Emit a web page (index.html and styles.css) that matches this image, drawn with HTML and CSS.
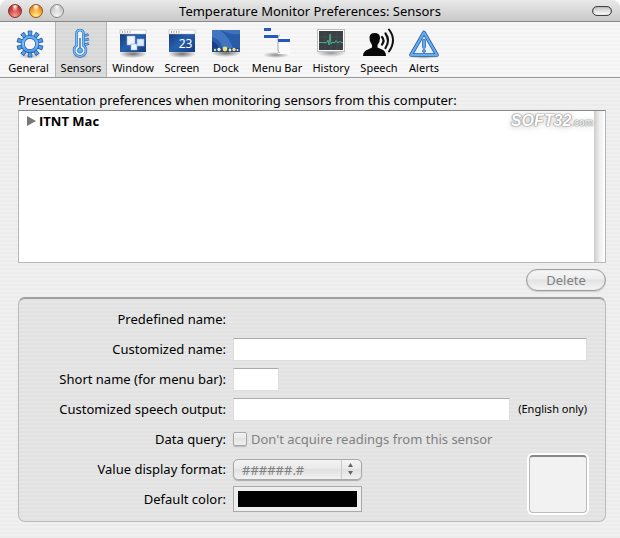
FILE: index.html
```html
<!DOCTYPE html>
<html lang="en">

<head>
    <meta charset="UTF-8">
    <meta name="viewport" content="width=device-width, initial-scale=1.0">
    <title>Temperature Monitor Preferences: Sensors</title>
    <link rel="stylesheet" href="styles.css">
</head>

<body>

    <!-- shared gradients -->
    <svg class="defs" width="0" height="0" aria-hidden="true">
        <defs>
            <linearGradient id="aqua" x1="0" y1="0" x2="0" y2="1">
                <stop offset="0" stop-color="#5aa9f2"/>
                <stop offset="0.5" stop-color="#7dc0fb"/>
                <stop offset="1" stop-color="#4a98ea"/>
            </linearGradient>
            <linearGradient id="desktop" x1="0" y1="0" x2="1" y2="1">
                <stop offset="0" stop-color="#12356f"/>
                <stop offset="0.5" stop-color="#2660ad"/>
                <stop offset="1" stop-color="#123c80"/>
            </linearGradient>
            <radialGradient id="shade">
                <stop offset="0" stop-color="#000" stop-opacity="0.55"/>
                <stop offset="1" stop-color="#000" stop-opacity="0"/>
            </radialGradient>
        </defs>
    </svg>

    <header class="titlebar">
        <div class="lights">
            <button class="light close" aria-label="Close"></button>
            <button class="light minimize" aria-label="Minimize"></button>
            <button class="light zoom" aria-label="Zoom"></button>
        </div>
        <h1>Temperature Monitor Preferences: Sensors</h1>
        <button class="pill" aria-label="Toggle toolbar"></button>
    </header>

    <nav class="toolbar">
        <button class="tool">
            <svg viewBox="0 0 32 32">
                <ellipse cx="17" cy="29" rx="12" ry="3" fill="url(#shade)" opacity="0.5"/>
                <g transform="translate(1 1)">
                    <g fill="#4f9fee" stroke="#2458a5" stroke-width="0.800">
                        <g id="teeth">
                            <path d="M14.500 8 L14 3 H18 L17.500 8 Z"/>
                            <path d="M14.500 8 L14 3 H18 L17.500 8 Z" transform="rotate(36 16 16)"/>
                            <path d="M14.500 8 L14 3 H18 L17.500 8 Z" transform="rotate(72 16 16)"/>
                            <path d="M14.500 8 L14 3 H18 L17.500 8 Z" transform="rotate(108 16 16)"/>
                            <path d="M14.500 8 L14 3 H18 L17.500 8 Z" transform="rotate(144 16 16)"/>
                        </g>
                        <use href="#teeth" transform="rotate(180 16 16)"/>
                    </g>
                    <circle cx="16" cy="16" r="7.200" fill="none" stroke="#2458a5" stroke-width="4"/>
                    <circle cx="16" cy="16" r="7.200" fill="none" stroke="url(#aqua)" stroke-width="2.600"/>
                </g>
            </svg>
            <span>General</span>
        </button>
        <button class="tool selected">
            <svg viewBox="0 0 32 32">
                <ellipse cx="15" cy="29" rx="8" ry="3" fill="url(#shade)" opacity="0.5"/>
                <g transform="translate(0 1)">
                    <path d="M17 6 Q18.500 8.500 23.500 6.500 M17 10.500 Q19 13 24 11 M17 15 Q19 17.500 24 15.500" fill="none" stroke="#2d6db9" stroke-width="2.600"/>
                    <path d="M17 6 Q18.500 8.500 23.500 6.500 M17 10.500 Q19 13 24 11 M17 15 Q19 17.500 24 15.500" fill="none" stroke="#74baf8" stroke-width="1.300"/>
                    <path d="M11.500 17.500 V5.500 A3.500 3.500 0 0 1 18.500 5.500 V17.500 A6 6 0 1 1 11.500 17.500 Z" fill="#eaf2fa" stroke="#2d6db9" stroke-width="2.600"/>
                    <path d="M11.500 17.500 V5.500 A3.500 3.500 0 0 1 18.500 5.500 V17.500 A6 6 0 1 1 11.500 17.500 Z" fill="none" stroke="#7bbdf7" stroke-width="1.400"/>
                    <path d="M15 10 V20" stroke="#3c83d0" stroke-width="1.600"/>
                    <circle cx="15" cy="22.500" r="2.600" fill="#67b1f6" stroke="#2d6db9" stroke-width="0.800"/>
                </g>
            </svg>
            <span>Sensors</span>
        </button>
        <button class="tool">
            <svg viewBox="0 0 32 32">
                <ellipse cx="16" cy="27" rx="14" ry="4" fill="url(#shade)"/>
                <rect x="3" y="3" width="26" height="22" fill="url(#desktop)"/>
                <rect x="3" y="3" width="26" height="4" fill="#fff" stroke="#aaa" stroke-width="0.500"/>
                <path d="M5 5 H15" stroke="#555" stroke-dasharray="1 1.500"/>
                <g stroke="#8fb1dc" stroke-width="0.600">
                    <rect x="10" y="9" width="8" height="9" fill="#f0f3f7"/>
                    <rect x="20" y="12" width="7" height="7" fill="#dfe8f4"/>
                    <rect x="14" y="17" width="6" height="6" fill="#f0f3f7"/>
                </g>
            </svg>
            <span>Window</span>
        </button>
        <button class="tool">
            <svg viewBox="0 0 32 32">
                <ellipse cx="16" cy="27" rx="14" ry="4" fill="url(#shade)"/>
                <rect x="3" y="3" width="26" height="22" fill="url(#desktop)"/>
                <rect x="3" y="3" width="26" height="4" fill="#fff" stroke="#aaa" stroke-width="0.500"/>
                <path d="M5 5 H15" stroke="#555" stroke-dasharray="1 1.500"/>
                <text x="19.500" y="20.500" text-anchor="middle" class="digits">23</text>
            </svg>
            <span>Screen</span>
        </button>
        <button class="tool">
            <svg viewBox="0 0 32 32">
                <ellipse cx="16" cy="26" rx="15" ry="4" fill="url(#shade)"/>
                <rect x="2" y="3" width="28" height="22" fill="#285ca9"/>
                <path d="M2 3 H10 Q20 10 24 25 H13 Q12 12 2 10 Z" fill="#3f76bf"/>
                <path d="M10 3 Q20 8 30 7 V3 Z" fill="#3e73bb"/>
                <path d="M2 14 Q8 16 10 25 H2 Z" fill="#173f82"/>
                <rect x="3" y="21" width="26" height="4" fill="#274571"/>
                <circle cx="5" cy="23" r="1.200" fill="#aee4b0"/>
                <circle cx="9" cy="22.500" r="1.700" fill="#e4e7ea"/>
                <circle cx="15" cy="22" r="2.400" fill="#f4e36a"/>
                <circle cx="20" cy="23" r="1.400" fill="#e8e8e8"/>
                <circle cx="24" cy="22.500" r="1.700" fill="#f3d98a"/>
                <circle cx="27.500" cy="23" r="1.100" fill="#d4dff0"/>
            </svg>
            <span>Dock</span>
        </button>
        <button class="tool">
            <svg viewBox="0 0 32 32">
                <ellipse cx="15" cy="28" rx="13" ry="3" fill="url(#shade)" opacity="0.8"/>
                <rect x="17" y="10" width="12" height="17" fill="#fafafa"/>
                <path d="M19 8 Q17 8 17 11 V23 Q17 26 19 26" fill="none" stroke="#a5a5a5"/>
                <rect x="3" y="1" width="7" height="3" fill="#2558c4"/>
                <rect x="3" y="8" width="14" height="3" fill="#2558c4"/>
                <rect x="17" y="12" width="12" height="3" fill="#2558c4"/>
            </svg>
            <span>Menu Bar</span>
        </button>
        <button class="tool">
            <svg viewBox="0 0 32 32">
                <ellipse cx="16" cy="26" rx="15" ry="4" fill="url(#shade)" opacity="0.7"/>
                <rect x="2.500" y="2.500" width="27" height="22" fill="#fff" stroke="#bbb"/>
                <rect x="4" y="4" width="24" height="19" fill="#3a4044"/>
                <path d="M4 10 H28 M4 16 H28 M10 4 V23 M16 4 V23 M22 4 V23" stroke="#4e565a" stroke-width="0.600"/>
                <path d="M4 15.500 H12 L13 13 L14 18 L15 7 L16 17 L17 15.500 H20 L21 13.500 L23 16 L25 14 L26 15.500 H28" fill="none" stroke="#49b488" stroke-width="0.900"/>
            </svg>
            <span>History</span>
        </button>
        <button class="tool">
            <svg viewBox="0 0 32 32">
                <path d="M0 29 Q0 24 5 22.500 L9 20.500 V18 Q6 14 6.500 10 Q7 6 11.500 6 Q17 6 17 11 Q17 15 14.500 18 V20.500 L19 22.500 Q23 24 23 29 Z" fill="#080808"/>
                <g fill="none" stroke="#111" stroke-linecap="round">
                    <path d="M19 10 Q22 13.500 19 17.500" stroke-width="2.200"/>
                    <path d="M22.500 6.500 Q27.500 13.500 22.500 21" stroke-width="2.200"/>
                    <path d="M26 2.500 Q34 13 26 24.500" stroke-width="2"/>
                </g>
            </svg>
            <span>Speech</span>
        </button>
        <button class="tool">
            <svg viewBox="0 0 32 32">
                <ellipse cx="16" cy="29.500" rx="15" ry="2.500" fill="url(#shade)" opacity="0.7"/>
                <path d="M16 5.500 L29 28 H3 Z" fill="#e9f2fb" stroke="#2658a5" stroke-width="3.600" stroke-linejoin="round"/>
                <path d="M16 5.500 L29 28 H3 Z" fill="none" stroke="#63adf3" stroke-width="2.200" stroke-linejoin="round"/>
                <path d="M16 13.500 V20" stroke="#2658a5" stroke-width="3.600" stroke-linecap="round"/>
                <path d="M16 13.500 V20" stroke="#63adf3" stroke-width="2.200" stroke-linecap="round"/>
                <circle cx="16" cy="24" r="1.500" fill="#63adf3" stroke="#2658a5" stroke-width="0.700"/>
            </svg>
            <span>Alerts</span>
        </button>
    </nav>

    <main>
        <h2>Presentation preferences when monitoring sensors from this computer:</h2>

        <div class="sensors">
            <ul>
                <li>
                    <button class="disclosure" aria-expanded="false">
                        <svg viewBox="0 0 9 10"><path d="M0 0 L9 5 L0 10 Z" fill="#777"/></svg>
                        ITNT Mac
                    </button>
                </li>
            </ul>
            <div class="scroller"></div>
            <span class="watermark">SOFT32<small>.com</small></span>
        </div>

        <div class="actions">
            <button class="delete" disabled>Delete</button>
        </div>

        <form class="details">
            <span class="label">Predefined name:</span>
            <span></span>

            <label for="custom">Customized name:</label>
            <input class="text" type="text" id="custom">

            <label for="short">Short name (for menu bar):</label>
            <input class="text short" type="text" id="short">

            <label for="speech">Customized speech output:</label>
            <div class="line">
                <input class="text" type="text" id="speech">
                <small>(English only)</small>
            </div>

            <span class="label">Data query:</span>
            <div class="line check">
                <input type="checkbox" id="skip" disabled>
                <label for="skip">Don't acquire readings from this sensor</label>
            </div>

            <label for="format">Value display format:</label>
            <div class="popup">
                <select id="format" disabled>
                    <option>######.#</option>
                </select>
                <svg viewBox="0 0 5 12"><path d="M0 4 L2.500 0 L5 4 Z M0 8 L2.500 12 L5 8 Z" fill="#666"/></svg>
            </div>

            <label for="color">Default color:</label>
            <input class="color" type="color" id="color" value="#000000">

            <div class="well"></div>
        </form>
    </main>

</body>
</html>
```

FILE: styles.css
```css
* {
    margin: 0;
    padding: 0;
    box-sizing: border-box;
}

html {
    background: #fff;
}

body {
    min-height: 100vh;
    font-family: "Lucida Grande", "Noto Sans", sans-serif;
    font-size: 13px;
    line-height: 20px;
    color: #000;
    background: repeating-linear-gradient(#ececec 0, #ececec 2px, #f0f0f0 2px, #f0f0f0 4px);
    border-radius: 8px 8px 0 0;
    overflow: hidden;
}

button,
input,
select {
    font: inherit;
    color: inherit;
    border: 0;
    background: none;
    appearance: none;
}

.defs {
    position: absolute;
}

/* title bar */

.titlebar {
    display: grid;
    grid-template-columns: 1fr auto 1fr;
    align-items: center;
    height: 22px;
    padding: 0 8px;
    background: linear-gradient(#e9e9e9, #c9c9c9);
    border-bottom: 1px solid #8a8a8a;
}

.titlebar h1 {
    font-size: 13px;
    font-weight: normal;
}

.lights {
    display: flex;
    gap: 7px;
}

.light {
    width: 14px;
    height: 14px;
    border: 1px solid #888;
    border-radius: 50%;
}

.close {
    border-color: #7c3431;
    background: radial-gradient(ellipse at 50% 12%, #fff 0, #e99 20%, transparent 40%), radial-gradient(circle at 50% 90%, #ff9a92, #c93d3a 60%, #8f2523);
}

.minimize {
    border-color: #95541c;
    background: radial-gradient(ellipse at 50% 12%, #fff 0, #fc9 20%, transparent 40%), radial-gradient(circle at 50% 90%, #fff27e, #f3982a 60%, #b85c13);
}

.zoom {
    background: radial-gradient(ellipse at 50% 12%, #fff 0, transparent 40%), radial-gradient(circle at 50% 90%, #f4f4f4, #cfcfcf 60%, #aaa);
}

.pill {
    justify-self: end;
    width: 20px;
    height: 10px;
    border: 1px solid #444;
    border-radius: 5px;
    background: linear-gradient(#c4c4c4, #fff);
    box-shadow: inset 0 0 1px #444;
}

/* toolbar */

.toolbar {
    display: grid;
    grid-template-columns: 53px 52px 52px 46px 42px 60px 48px 48px 42px;
    height: 56px;
    padding: 0 2px;
    background: repeating-linear-gradient(#f7f7f7 0, #f7f7f7 2px, #f3f3f3 2px, #f3f3f3 4px);
    border-bottom: 1px solid #999;
}

.tool {
    display: flex;
    flex-direction: column;
    align-items: center;
    padding-top: 5px;
    font-size: 11px;
    line-height: 17px;
    white-space: nowrap;
    border: solid transparent;
    border-width: 0 1px;
}

.tool svg {
    width: 32px;
    height: 32px;
    flex: none;
}

.selected {
    background: repeating-linear-gradient(#dcdcdc 0, #dcdcdc 2px, #d8d8d8 2px, #d8d8d8 4px);
    border-color: #b4b4b4;
}

.digits {
    font-size: 12px;
    fill: #fff;
}

/* sensor list */

main {
    padding: 13px 14px 16px 18px;
}

h2 {
    font-size: 13px;
    font-weight: normal;
    line-height: 19px;
}

.sensors {
    position: relative;
    display: flex;
    height: 153px;
    background: #fff;
    border: 1px solid #b8b8b8;
    border-top-color: #888;
}

.sensors ul {
    flex: 1;
    list-style: none;
}

.disclosure {
    display: flex;
    align-items: center;
    gap: 3px;
    padding-left: 8px;
    font-family: "Lucida Grande", "Open Sans", sans-serif;
    font-weight: bold;
}

.disclosure svg {
    width: 9px;
    height: 10px;
}

.scroller {
    width: 11px;
    background: linear-gradient(to right, #ccc, #eee 50%, #fff);
}

.watermark {
    position: absolute;
    top: 0;
    right: 12px;
    font-family: "Liberation Sans", sans-serif;
    font-size: 16px;
    font-style: italic;
    font-weight: bold;
    color: #fff;
    text-shadow: 0 0 1px #888, 0 0 1px #888, 0 0 2px #999, 0 1px 6px #bbb;
}

.watermark small {
    font-size: 10px;
    font-style: normal;
    font-weight: normal;
}

.actions {
    display: flex;
    justify-content: flex-end;
    padding: 6px 0;
}

.delete {
    width: 80px;
    height: 22px;
    color: #808080;
    border: 1px solid #a0a0a0;
    border-radius: 11px;
    background: linear-gradient(#f6f6f6, #ededed 45%, #e2e2e2 50%, #f6f6f6);
    box-shadow: inset 0 0 1px #999, 0 1px 1px #ccc;
}

/* details of the selected sensor */

.details {
    display: grid;
    grid-template-columns: 207px 1fr;
    grid-auto-rows: 30px;
    align-items: center;
    column-gap: 7px;
    padding: 5px 18px 7px 0;
    background: repeating-linear-gradient(#e2e2e2 0, #e2e2e2 2px, #e6e6e6 2px, #e6e6e6 4px);
    border: 1px solid #bbb;
    border-top: 2px solid #a0a0a0;
    border-radius: 7px;
}

.details > label,
.label {
    grid-column: 1;
    text-align: right;
}

.text {
    width: 100%;
    height: 23px;
    padding: 0 4px;
    background: #fff;
    border: 1px solid #ddd;
    border-top-color: #aaa;
}

.short {
    width: 46px;
}

.line {
    display: flex;
    align-items: center;
    gap: 8px;
}

.line .text {
    flex: 1;
}

.line small {
    font-size: 11px;
}

.check {
    gap: 4px;
    color: #808080;
}

.check input {
    width: 14px;
    height: 14px;
    border: 1px solid #a8a8a8;
    border-radius: 2px;
    background: linear-gradient(#f4f4f4, #e4e4e4 50%, #f0f0f0);
    box-shadow: 0 1px 1px #bbb;
}

.popup {
    position: relative;
    grid-area: 6 / 2;
    width: 129px;
    height: 21px;
}

.popup select {
    width: 100%;
    height: 100%;
    padding-left: 8px;
    color: #808080;
    opacity: 1;
    border: 1px solid #a8a8a8;
    border-radius: 5px;
    background: linear-gradient(to right, transparent 107px, #ccc 107px, #ccc 108px, transparent 108px), linear-gradient(#f4f4f4, #e9e9e9 45%, #e0e0e0 50%, #f2f2f2);
    box-shadow: 0 1px 1px #aaa;
}

.popup svg {
    position: absolute;
    top: 4px;
    right: 9px;
    width: 5px;
    height: 12px;
}

.color {
    grid-area: 7 / 2;
    width: 129px;
    height: 26px;
    padding: 4px;
    background: #eee;
    border: 1px solid #aaa;
}

.color::-webkit-color-swatch-wrapper {
    padding: 0;
}

.color::-webkit-color-swatch {
    border: 0;
}

.well {
    grid-area: 6 / 2 / span 2;
    justify-self: end;
    width: 58px;
    height: 58px;
    background: #f2f2f2;
    border: 1px solid #bbb;
    border-top: 2px solid #888;
    border-radius: 4px;
    box-shadow: 0 0 0 2px #fff;
}
```
